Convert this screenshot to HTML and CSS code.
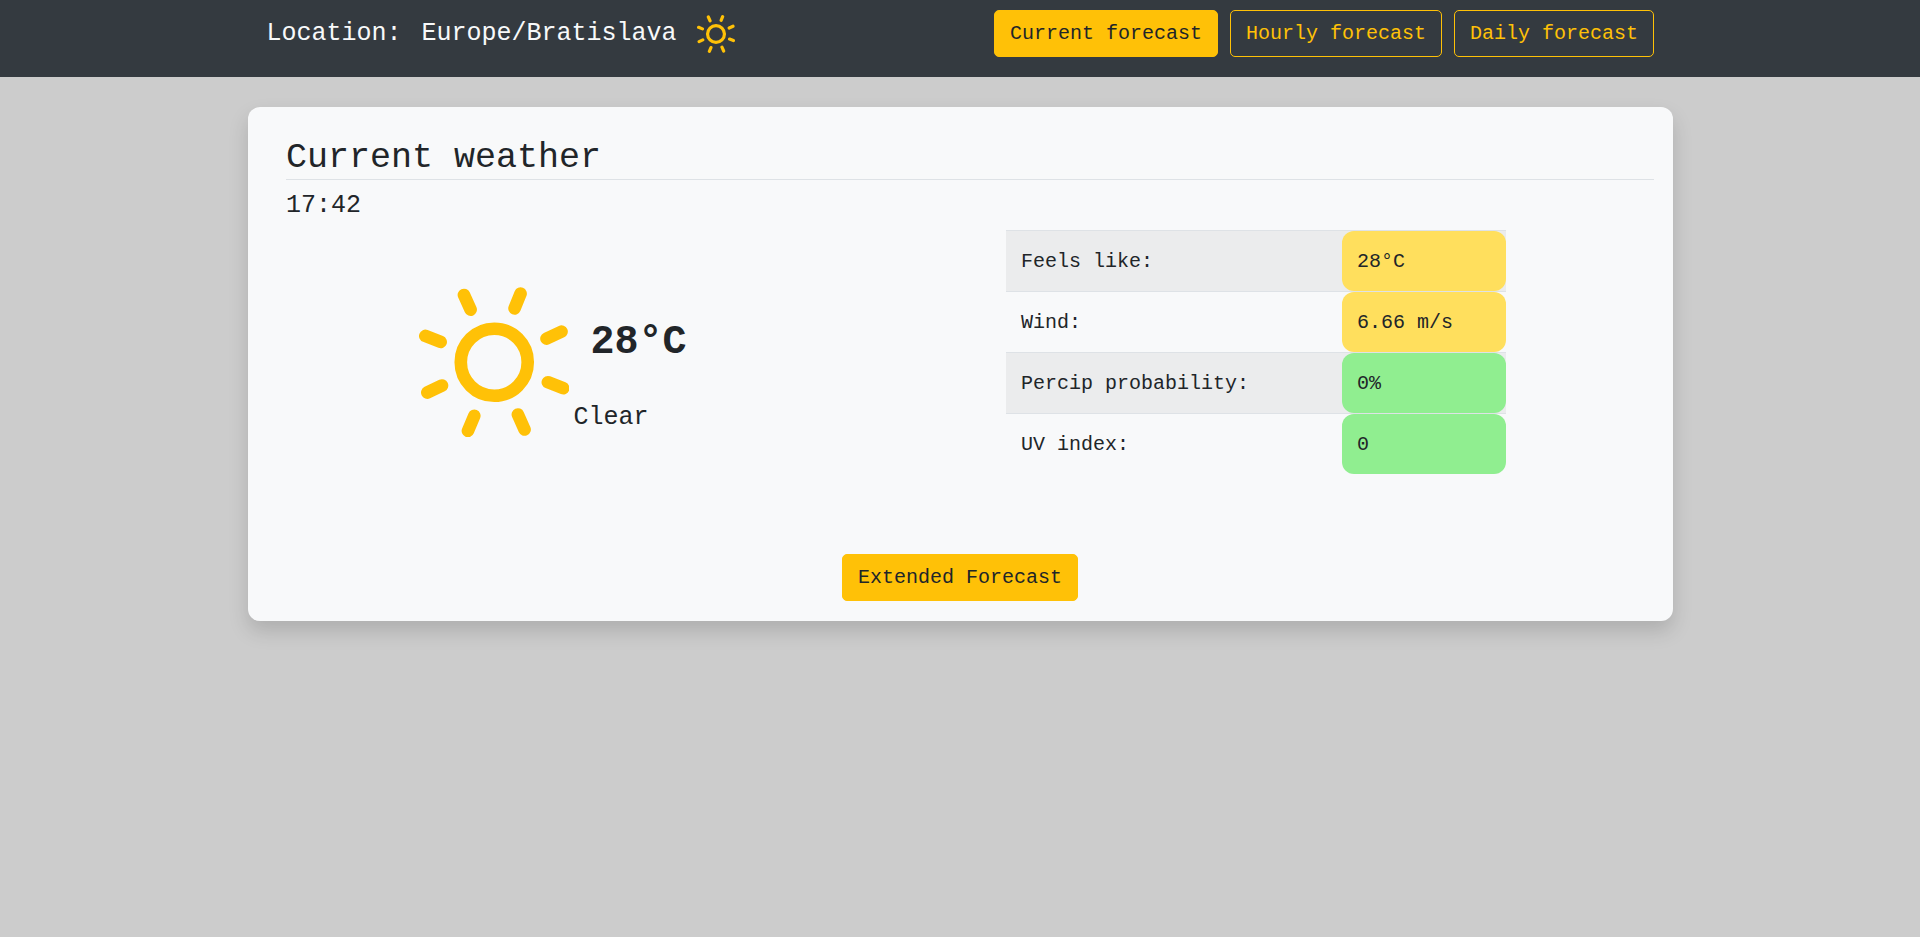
FILE: index.html
```html
<!DOCTYPE html>
<html lang="en">
<head>
<meta charset="utf-8">
<title>Weather</title>
<link rel="stylesheet" href="styles.css">
</head>
<body>
<svg class="defs" width="0" height="0">
  <symbol id="sun" viewBox="56 50 452 452">
    <g fill="none" stroke="#ffc107" stroke-width="38" stroke-linecap="round">
      <circle cx="282" cy="276" r="100.5"/>
      <path d="M191 74L211 118M361 70L343 114M484 184L439 205M489 354L443 336M373 478L353 433M203 482L222 437M81 367L125 346M75 197L121 215"/>
    </g>
  </symbol>
</svg>
<header class="navbar">
  <div class="container navbar-inner">
    <div class="location">
      <span>Location:</span>
      <span>Europe/Bratislava</span>
      <svg class="sun-small"><use href="#sun"/></svg>
    </div>
    <nav class="tabs">
      <button class="btn btn-solid">Current forecast</button>
      <button class="btn btn-outline">Hourly forecast</button>
      <button class="btn btn-outline">Daily forecast</button>
    </nav>
  </div>
</header>
<main class="container card">
  <h1 class="title">Current weather</h1>
  <div class="time">17:42</div>
  <div class="columns">
    <section class="summary">
      <svg class="sun-large"><use href="#sun"/></svg>
      <div class="reading">
        <strong class="temperature">28°C</strong>
        <span class="condition">Clear</span>
      </div>
    </section>
    <dl class="details">
      <div class="row"><dt>Feels like:</dt><dd class="warm">28°C</dd></div>
      <div class="row"><dt>Wind:</dt><dd class="warm">6.66 m/s</dd></div>
      <div class="row"><dt>Percip probability:</dt><dd class="good">0%</dd></div>
      <div class="row"><dt>UV index:</dt><dd class="good">0</dd></div>
    </dl>
  </div>
  <div class="actions">
    <button class="btn btn-solid">Extended Forecast</button>
  </div>
</main>
</body>
</html>
```
FILE: styles.css
```css
* { box-sizing: border-box; }

html { font-size: 20px; }

body {
  margin: 0;
  min-height: 100vh;
  background: #ccc;
  color: #212529;
  font-family: "Courier New", "Liberation Mono", monospace;
  line-height: 1.5;
}

.defs { position: absolute; }

.container {
  width: 1425px;
  margin: 0 auto;
}

.navbar {
  height: 77px;
  padding-top: 10px;
  background: #343a40;
}

.navbar-inner {
  display: flex;
  justify-content: space-between;
  align-items: flex-start;
  padding: 0 18.5px 0 19px;
}

.location {
  display: flex;
  align-items: flex-start;
  gap: 20px;
  padding-top: 5px;
  color: #f8f9fa;
  font-size: 25px;
  line-height: 37px;
}

.sun-small {
  width: 38px;
  height: 38px;
}

.tabs {
  display: flex;
  gap: 12px;
}

.btn {
  height: 47px;
  padding: 7.5px 15px;
  border: 1px solid #ffc107;
  border-radius: 5px;
  font: inherit;
}

.btn-solid {
  background: #ffc107;
  color: #212529;
}

.btn-outline {
  background: transparent;
  color: #ffc107;
}

.card {
  height: 514px;
  margin-top: 30px;
  padding: 30px 19px 20px 38.5px;
  border-radius: 12px;
  background: #f8f9fa;
  box-shadow: 0 10px 20px rgba(0, 0, 0, 0.15);
  display: flex;
  flex-direction: column;
}

.title {
  height: 43px;
  margin: 0;
  border-bottom: 1px solid #dee2e6;
  font-size: 35px;
  font-weight: 400;
  line-height: 42px;
}

.time {
  height: 50px;
  padding-top: 11px;
  font-size: 25px;
  line-height: 30px;
}

.columns {
  display: grid;
  grid-template-columns: 720px 500px;
}

.summary {
  display: flex;
  padding: 56.5px 0 0 132.5px;
}

.sun-large {
  width: 150.5px;
  height: 150.5px;
}

.reading {
  display: flex;
  flex-direction: column;
  padding: 32px 0 0 4.5px;
}

.temperature {
  padding-left: 17px;
  font-size: 40px;
  line-height: 48px;
}

.condition {
  padding-top: 36px;
  font-size: 25px;
  line-height: 30px;
}

.details { margin: 0; }

.row {
  display: flex;
  height: 61px;
  border-top: 1px solid #dee2e6;
}

.row:nth-child(odd) { background: #ebeced; }

.row dt {
  width: 336px;
  padding: 16px 15px 14px;
}

.row dd {
  width: 164px;
  margin: 0;
  padding: 16px 15px 14px;
  border-radius: 12px;
}

.warm { background: #ffdf5d; }

.good { background: #90ee90; }

.actions {
  margin-top: auto;
  padding-right: 19.5px;
  text-align: center;
}
```
